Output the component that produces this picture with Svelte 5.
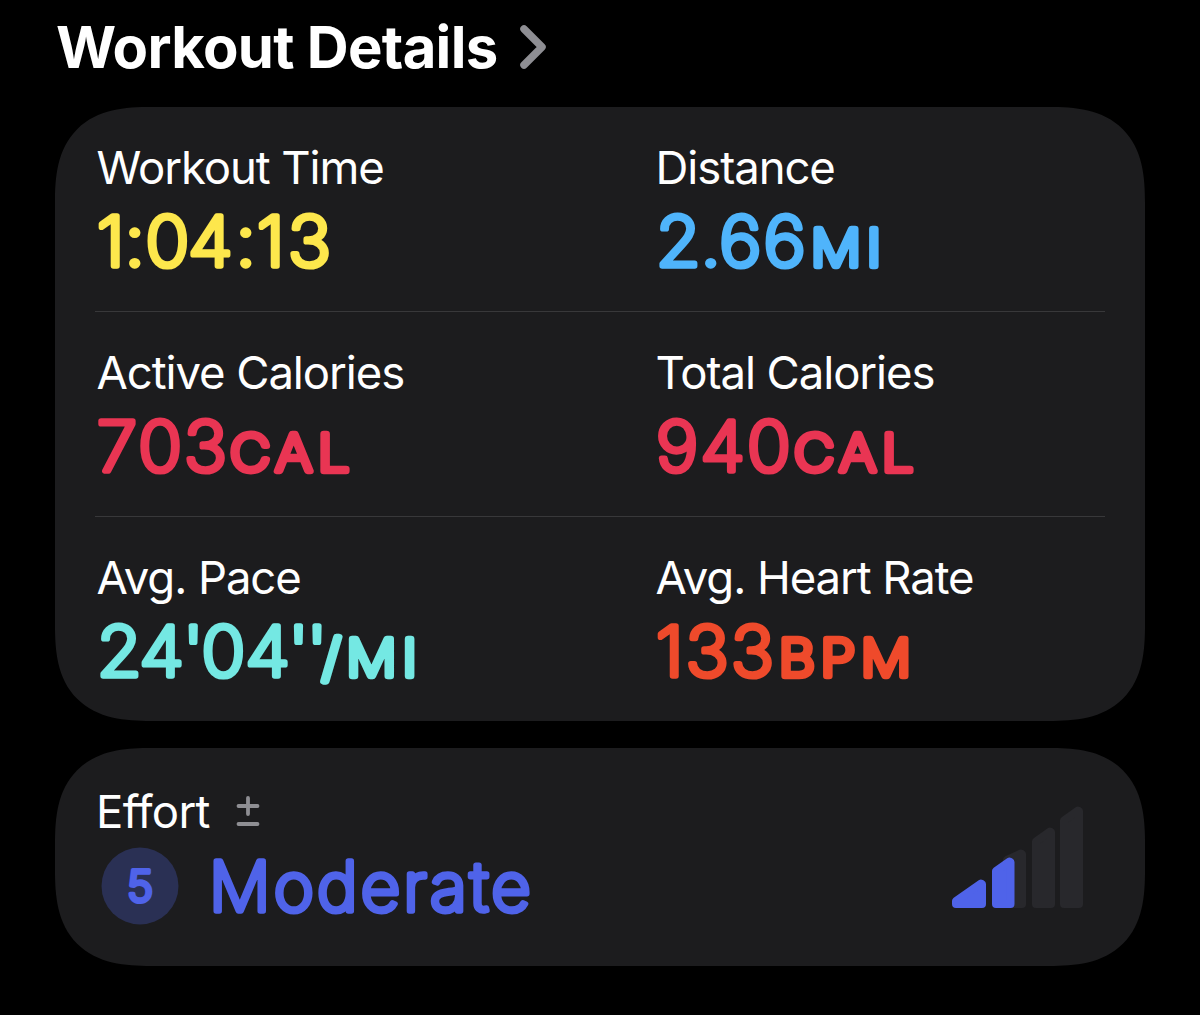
<script>
	// dx nudges single glyphs, so the punctuation sits tight between the digits
	const rows = [
		[
			{ label: 'Workout Time', color: 'yellow', parts: [{ text: '1:04:13', x: 0, dx: '0 -2 -1.5 -3 1 -1 1' }] },
			{ label: 'Distance', color: 'blue', parts: [{ text: '2.66', x: 0, dx: '0 -2 -2' }, { text: 'MI', x: 155, unit: true }] }
		],
		[
			{ label: 'Active Calories', color: 'red', parts: [{ text: '703', x: 0 }, { text: 'CAL', x: 133, unit: true }] },
			{ label: 'Total Calories', color: 'red', parts: [{ text: '940', x: 0 }, { text: 'CAL', x: 138, unit: true }] }
		],
		[
			{ label: 'Avg. Pace', color: 'teal', parts: [{ text: "24'04''", x: 0, dx: '0 -3 -3 -4 -2 -3.5 -4' }, { text: '/MI', x: 225, unit: true }] },
			{ label: 'Avg. Heart Rate', color: 'orange', parts: [{ text: '133', x: 0 }, { text: 'BPM', x: 123, unit: true }] }
		]
	];

	const effort = { level: 5, name: 'Moderate' };
</script>

<main class="workout">
	<header class="workout__header">
		<h1 class="workout__title">Workout Details</h1>
		<svg class="workout__chevron" width="28" height="46" viewBox="0 0 28 46" fill="none">
			<path d="M5 5L23 23L5 41" stroke="currentColor" stroke-width="7.5" stroke-linecap="round" stroke-linejoin="round" />
		</svg>
	</header>

	<section class="card">
		{#each rows as row}
			<div class="row">
				{#each row as metric}
					<div class="metric">
						<div class="label">{metric.label}</div>
						<svg class="value value--{metric.color}" width="400" height="72">
							{#each metric.parts as part}
								<text class="value__text" class:value__text--unit={part.unit} x={part.x} dx={part.dx} y="70">{part.text}</text>
							{/each}
						</svg>
					</div>
				{/each}
			</div>
		{/each}
	</section>

	<section class="card card--effort">
		<div>
			<div class="effort__head">
				<div class="label label--effort">Effort</div>
				<svg class="effort__adjust" width="24" height="32" viewBox="0 0 24 32" fill="none">
					<path d="M12 2V18M2.5 10H21.5M2.5 28H21.5" stroke="currentColor" stroke-width="3.8" stroke-linecap="round" />
				</svg>
			</div>
			<div class="effort__body">
				<svg class="effort__level" width="78" height="78">
					<circle cx="39" cy="39" r="38.5" />
					<text x="39" y="55" text-anchor="middle">{effort.level}</text>
				</svg>
				<svg class="value value--name value--indigo" width="340" height="78">
					<text x="0" y="63.5">{effort.name}</text>
				</svg>
			</div>
		</div>
		<svg class="bars" width="134" height="104" viewBox="950 804 134 104">
			<path class="bars__off" d="M1007 860L1021 853.5L1022 854V904H1007Z" />
			<path class="bars__off" d="M1036 841.500L1050 831.500L1051 832V904H1036Z" />
			<path class="bars__off" d="M1064 820.500L1078 810.500L1079 811V904H1064Z" />
			<path class="bars__on" d="M956 901L981 883.5L982 884V904H956Z" />
			<path class="bars__on" d="M996 871L1009.5 861.5L1010.5 862V904H996Z" />
		</svg>
	</section>
</main>

<style>
	:global(body) {
		margin: 0;
		background: #000;
	}

	.workout {
		box-sizing: border-box;
		height: 1015px;
		padding: 12px 55px 0;
		background: #000;
		color: #fff;
		font-family: Inter, "Liberation Sans", sans-serif;
	}

	.workout__header {
		display: flex;
		align-items: center;
		gap: 22px;
		height: 70px;
		margin-bottom: 25px;
		padding-left: 1px;
	}

	.workout__title {
		margin: 0;
		font-size: 58px;
		line-height: 70px;
		font-weight: 700;
		letter-spacing: -0.7px;
	}

	.workout__chevron {
		color: #8e8e93;
	}

	.card {
		background: #1c1c1e;
		border-radius: 76px;
	}

	@supports (corner-shape: squircle) {
		.card {
			border-radius: 96px;
			corner-shape: superellipse(1.4);
		}
	}

	.row {
		display: grid;
		grid-template-columns: 559px 1fr;
		height: 204px;
		margin: 0 40px;
		padding: 33px 0 0 1.5px;
		box-sizing: border-box;
	}

	.row + .row {
		height: 205px;
		border-top: 1px solid #38383a;
	}

	.label {
		font-size: 45.5px;
		line-height: 56px;
		letter-spacing: -1.08px;
		white-space: nowrap;
	}

	.label--effort {
		letter-spacing: -0.7px;
	}

	.value {
		display: block;
		overflow: visible;
		font-size: 68.5px;
		font-weight: 200;
		letter-spacing: 2.2px;
		fill: currentColor;
		stroke: currentColor;
		stroke-width: 5.4px;
		stroke-linejoin: round;
	}

	.value--name {
		letter-spacing: 3.2px;
	}

	.value__text {
		transform: scaleX(1.055);
		transform-box: fill-box;
		transform-origin: left;
	}

	.value__text--unit {
		font-size: 51px;
		letter-spacing: 5.5px;
		stroke-width: 6.4px;
		transform: scaleX(1.09);
	}

	.value--yellow {
		color: #fde74c;
	}

	.value--blue {
		color: #4fb4fb;
	}

	.value--red {
		color: #e93553;
	}

	.value--teal {
		color: #74e8e3;
	}

	.value--orange {
		color: #ef4a2b;
	}

	.value--indigo {
		color: #4f63e9;
	}

	.card--effort {
		display: flex;
		justify-content: space-between;
		box-sizing: border-box;
		height: 218px;
		margin-top: 27px;
		padding: 36px 61px 0 41px;
	}

	.effort__head {
		display: flex;
		align-items: center;
		gap: 26px;
		height: 56px;
	}

	.effort__adjust {
		color: #8e8e93;
	}

	.effort__body {
		display: flex;
		align-items: center;
		gap: 30px;
		margin: 7px 0 0 5px;
	}

	.effort__level {
		fill: #4f63e9;
		font-size: 44px;
		font-weight: 300;
	}

	.effort__level circle {
		fill: #2a3054;
	}

	.effort__level text {
		stroke: #4f63e9;
		stroke-width: 4px;
		stroke-linejoin: round;
	}

	.bars {
		margin-top: 20px;
	}

	.bars path {
		stroke-width: 8px;
		stroke-linejoin: round;
	}

	.bars__off {
		fill: #28282c;
		stroke: #28282c;
	}

	.bars__on {
		fill: #4f63e9;
		stroke: #4f63e9;
	}
</style>
